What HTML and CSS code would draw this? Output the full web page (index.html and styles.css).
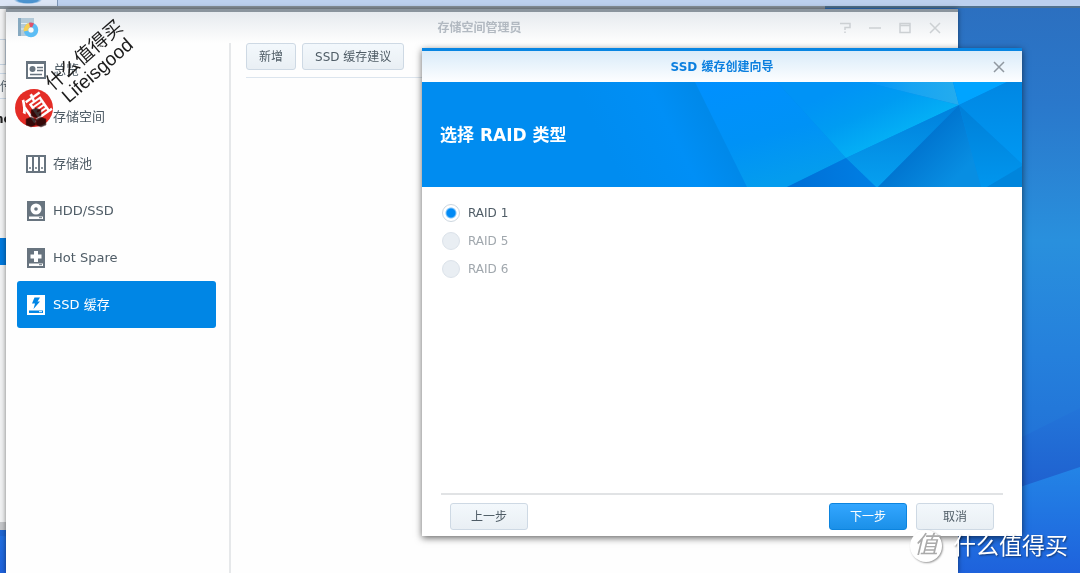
FILE: index.html
```html
<!DOCTYPE html>
<html lang="zh-CN">
<head>
<meta charset="utf-8">
<title>存储空间管理员</title>
<link rel="stylesheet" href="styles.css">
</head>
<body>
<div class="desktop">
  <svg class="wallpaper" viewBox="0 0 1080 573" preserveAspectRatio="none" aria-hidden="true">
    <defs>
      <linearGradient id="sky" x1="0" y1="0" x2="0" y2="1">
        <stop offset="0" stop-color="#2c6fbf"/><stop offset=".18" stop-color="#2a78cb"/>
        <stop offset=".42" stop-color="#2990dd"/><stop offset=".62" stop-color="#2580dc"/><stop offset="1" stop-color="#1d5fd0"/>
      </linearGradient>
      <linearGradient id="ray" gradientUnits="userSpaceOnUse" x1="0" y1="400" x2="0" y2="490">
        <stop offset="0" stop-color="#2377da"/><stop offset="1" stop-color="#1f60cf"/>
      </linearGradient>
      <linearGradient id="hill" gradientUnits="userSpaceOnUse" x1="0" y1="467" x2="0" y2="573">
        <stop offset="0" stop-color="#2384e6"/><stop offset="1" stop-color="#1e62dc"/>
      </linearGradient>
    </defs>
    <rect width="1080" height="573" fill="url(#sky)"/>
    <path d="M0 573V560L1020 438L1080 408V573Z" fill="url(#ray)"/>
    <path d="M0 573V536Q760 570 1020 487L1080 467V573Z" fill="url(#hill)"/>
  </svg>
  <div class="taskbar"><span class="task"></span></div>

  <div class="back-window">
    <span class="back-button"></span>
    <span class="back-header">传</span>
    <span class="back-text">ne</span>
    <span class="back-selected"></span>
  </div>

  <section class="window">
    <header class="window-header">
      <svg class="app-icon" viewBox="0 0 22 22" aria-hidden="true">
        <path d="M1 1H17V19H1Z" fill="#b3cad9"/><path d="M1 1H4V19H1Z" fill="#86a9c0"/>
        <path d="M4 6.500H17M4 12H12" stroke="#e4eff5" stroke-width="1.200"/>
        <circle cx="14" cy="13" r="5" fill="none" stroke="#5bbdf5" stroke-width="4.500"/>
        <path d="M9 14A5 5 0 0 1 13 8" fill="none" stroke="#f6cf58" stroke-width="4.500"/>
        <path d="M12.500 8A5 5 0 0 1 16 8.400" fill="none" stroke="#df5268" stroke-width="4.500"/>
        <circle cx="14" cy="13" r="2.500" fill="#f8fbfc"/>
      </svg>
      <h1 class="window-title">存储空间管理员</h1>
      <div class="window-controls">
        <button class="control" aria-label="帮助"><svg viewBox="0 0 12 12"><path d="M1 1.500H11V5.500H6V8M6 9.500V11"/></svg></button>
        <button class="control" aria-label="最小化"><svg viewBox="0 0 12 12"><path d="M0 6H12"/></svg></button>
        <button class="control" aria-label="最大化"><svg viewBox="0 0 12 12"><path d="M1 1.500H11V10.500H1ZM1 3.500H11"/></svg></button>
        <button class="control" aria-label="关闭"><svg viewBox="0 0 12 12"><path d="M1 1L11 11M11 1L1 11"/></svg></button>
      </div>
    </header>
    <div class="window-body">
      <nav class="sidebar">
        <a class="nav-item" href="#overview">
          <svg class="nav-icon" viewBox="0 0 22 22"><path d="M1 2H21V20H1Z" fill="#68747f"/><path d="M3 5H19V18H3Z" fill="#fff"/><circle cx="7.500" cy="10" r="3" fill="#68747f"/><path d="M12 8.500H18M12 11.500H18M5 15.500H17" stroke="#68747f" stroke-width="1.600"/></svg>
          <span>总览</span></a>
        <a class="nav-item" href="#volume">
          <svg class="nav-icon" viewBox="0 0 22 22"><g fill="#3c3030" stroke="#8a5f62" stroke-width=".6"><path d="M11 2L16 4V10L11 12L6 10V4Z"/><path d="M6 11L11 13V19L6 21L1 19V13Z"/><path d="M16 11L21 13V19L16 21L11 19V13Z"/></g></svg>
          <span>存储空间</span></a>
        <a class="nav-item" href="#pool">
          <svg class="nav-icon" viewBox="0 0 22 22"><path d="M1 2H21V20H1Z" fill="#68747f"/><path d="M3 4H7V18H3ZM9 4H13V18H9ZM15 4H19V18H15Z" fill="#fff"/><path d="M4 15H6M10 15H12M16 15H18" stroke="#68747f" stroke-width="1.500"/></svg>
          <span>存储池</span></a>
        <a class="nav-item" href="#hdd">
          <svg class="nav-icon" viewBox="0 0 22 22"><path d="M2 1H20V21H2Z" fill="#68747f"/><circle cx="11" cy="9" r="5.500" fill="#fff"/><circle cx="11" cy="9" r="1.800" fill="#68747f"/><path d="M4 16.500H18V19H4Z" fill="#fff"/><path d="M14 17.700H17" stroke="#68747f"/></svg>
          <span>HDD/SSD</span></a>
        <a class="nav-item" href="#spare">
          <svg class="nav-icon" viewBox="0 0 22 22"><path d="M2 1H20V21H2Z" fill="#68747f"/><path d="M9 4H13V7.500H16.500V11.500H13V15H9V11.500H5.500V7.500H9Z" fill="#fff"/><path d="M4 16.500H18V19H4Z" fill="#fff"/><path d="M14 17.700H17" stroke="#68747f"/></svg>
          <span>Hot Spare</span></a>
        <a class="nav-item nav-item-active" href="#cache" aria-current="page">
          <svg class="nav-icon" viewBox="0 0 22 22"><path d="M2 1H20V21H2Z" fill="#fff"/><path d="M9.500 3.500H15L12.500 7.500H15L8.500 15L10 9.500H7Z" fill="#0086e5"/><path d="M4 16.500H18V19H4Z" fill="#0086e5"/><path d="M14 17.700H17" stroke="#fff"/></svg>
          <span>SSD 缓存</span></a>
      </nav>
      <main class="content">
        <div class="toolbar">
          <button class="button">新增</button>
          <button class="button">SSD 缓存建议</button>
        </div>
      </main>
    </div>
  </section>

  <section class="dialog" role="dialog" aria-labelledby="dialog-title">
    <header class="dialog-header">
      <h2 class="dialog-title" id="dialog-title">SSD 缓存创建向导</h2>
      <button class="control dialog-close" aria-label="关闭"><svg viewBox="0 0 12 12"><path d="M1 1L11 11M11 1L1 11"/></svg></button>
    </header>
    <div class="banner">
      <svg class="banner-art" viewBox="0 0 600 105" preserveAspectRatio="xMaxYMid slice" aria-hidden="true">
        <defs>
          <linearGradient id="b0" gradientUnits="userSpaceOnUse" x1="190" y1="80" x2="310" y2="20"><stop offset="0" stop-color="#008cf0"/><stop offset=".5" stop-color="#008ff6"/><stop offset=".8" stop-color="#0089ea"/></linearGradient>
          <linearGradient id="b1" x1="0" y1="0" x2=".4" y2="1"><stop offset="0" stop-color="#0090ff"/><stop offset=".6" stop-color="#0092f6"/><stop offset="1" stop-color="#049cee"/></linearGradient>
          <linearGradient id="b2" gradientUnits="userSpaceOnUse" x1="430" y1="0" x2="462" y2="68"><stop offset="0" stop-color="#0093f6"/><stop offset=".45" stop-color="#009cf2"/><stop offset="1" stop-color="#05b4f6"/></linearGradient>
          <linearGradient id="b3" x1="0" y1="0" x2="1" y2="0"><stop offset="0" stop-color="#0094fa"/><stop offset=".5" stop-color="#18a4f2"/><stop offset="1" stop-color="#24acee"/></linearGradient>
          <linearGradient id="b4" x1="0" y1="0" x2="0" y2="1"><stop offset="0" stop-color="#0080dc"/><stop offset="1" stop-color="#06a0f0"/></linearGradient>
          <linearGradient id="b5" gradientUnits="userSpaceOnUse" x1="485" y1="65" x2="525" y2="105"><stop offset="0" stop-color="#0072ce"/><stop offset="1" stop-color="#088ee2"/></linearGradient>
          <linearGradient id="b6" x1="0" y1="0" x2="0" y2="1"><stop offset="0" stop-color="#0087e3"/><stop offset="1" stop-color="#0098f2"/></linearGradient>
          <linearGradient id="b8" x1="0" y1="0" x2="0" y2="1"><stop offset="0" stop-color="#007fd8"/><stop offset="1" stop-color="#0096ee"/></linearGradient>
          <linearGradient id="b7"><stop offset="0" stop-color="#006fd6"/><stop offset="1" stop-color="#007fe4"/></linearGradient>
        </defs>
        <path d="M0 0H600V105H0Z" fill="url(#b0)"/>
        <path d="M273 0H355L424 76L365 105H325Z" fill="url(#b1)"/>
        <path d="M355 0H443L537 23L424 76Z" fill="url(#b2)"/>
        <path d="M443 0H531L537 23Z" fill="url(#b3)"/>
        <path d="M531 0H585L537 23Z" fill="#00a4ff"/>
        <path d="M585 0H600V82L537 23Z" fill="url(#b6)"/>
        <path d="M424 76L537 23L456 105H454Z" fill="url(#b4)"/>
        <path d="M365 105L424 76L454 105Z" fill="url(#b7)"/>
        <path d="M537 23L559 105H456Z" fill="url(#b5)"/>
        <path d="M537 23L600 82V85L565 105H559Z" fill="url(#b8)"/>
        <path d="M600 84V105H565Z" fill="#0085dc"/>
      </svg>
      <h3 class="banner-title">选择 RAID 类型</h3>
    </div>
    <form class="options">
      <label class="option"><input class="radio" type="radio" name="raid" checked><span>RAID 1</span></label>
      <label class="option option-disabled"><input class="radio" type="radio" name="raid" disabled><span>RAID 5</span></label>
      <label class="option option-disabled"><input class="radio" type="radio" name="raid" disabled><span>RAID 6</span></label>
    </form>
    <footer class="dialog-footer">
      <button class="button button-wide button-back">上一步</button>
      <button class="button button-wide button-primary">下一步</button>
      <button class="button button-wide">取消</button>
    </footer>
  </section>

  <div class="stamp">什么值得买<br>Lifeisgood</div>
  <div class="seal"><span class="seal-text">值</span></div>
  <div class="brand"><span class="brand-logo">值</span><span>什么值得买</span></div>
</div>
</body>
</html>
```
FILE: styles.css
```css
* { box-sizing: border-box; }
body {
  margin: 0;
  font: 12px/18px "DejaVu Sans", "Noto Sans CJK SC", sans-serif;
  color: #4f5c66;
}
h1, h2, h3 { margin: 0; }
button { font: inherit; cursor: pointer; }

.desktop { position: relative; height: 100vh; overflow: hidden; }
.wallpaper { position: absolute; width: 100%; height: 100%; }
.taskbar {
  position: relative;
  height: 8px;
  background: #bcd0ee;
  border-bottom: 2px solid #52728e;
}
.task {
  display: block;
  width: 58px;
  height: 6px;
  background: radial-gradient(ellipse 14px 4px at 28px 0, #4b93cf 70%, transparent), #dbe5f5;
  border-right: 1px solid #7e97b8;
}

.back-window {
  position: absolute;
  top: 6px;
  left: 0;
  right: 255px;
  height: 524px;
  background: #f1f2f3;
  border-top: 3px solid #8a949d;
  border-bottom: 8px solid #c4c6c9;
}
.back-button, .back-header, .back-text, .back-selected { position: absolute; left: 0; width: 6px; overflow: hidden; }
.back-button { top: 30px; height: 26px; border: solid #c3d1df; border-width: 1px 1px 1px 0; }
.back-header { top: 64px; height: 26px; line-height: 26px; border: solid #c9d7e5; border-width: 1px 0; }
.back-text { top: 101px; font-weight: bold; text-indent: -5px; color: #222; }
.back-selected { top: 229px; height: 27px; background: #0079dc; }

.window {
  position: absolute;
  top: 9px;
  left: 6px;
  right: 122px;
  bottom: 0;
  display: flex;
  flex-direction: column;
  background: #fefefe;
  border-top: 3px solid #8a949d;
  box-shadow: 0 0 5px rgba(0, 0, 0, .5);
}
.window-header {
  display: grid;
  grid-template-columns: 1fr auto 1fr;
  align-items: center;
  height: 31px;
  padding: 0 16px 0 11px;
  background: linear-gradient(#e6eaee, #fefefe);
}
.app-icon { width: 22px; height: 22px; }
.window-title { font-size: 12px; color: #b2b9c1; }
.window-controls { display: flex; justify-content: flex-end; gap: 16px; }
.control {
  display: flex;
  align-items: center;
  justify-content: center;
  width: 14px;
  height: 18px;
  padding: 0;
  background: none;
  border: 0;
}
.control svg { width: 12px; height: 12px; fill: none; stroke: #ccd0d3; stroke-width: 1.5; }

.window-body { flex: 1; display: flex; }
.sidebar {
  flex: 0 0 225px;
  padding: 3px 13px 0 11px;
  border-right: 2px solid #e6e8ea;
}
.nav-item {
  display: flex;
  align-items: center;
  gap: 6px;
  height: 47px;
  padding-left: 8px;
  border-radius: 3px;
  font-size: 13px;
  color: #4f5c66;
  text-decoration: none;
}
.nav-item-active { background: #0086e5; color: #fff; }
.nav-icon { width: 22px; height: 22px; }
.content { flex: 1; padding: 0 15px; }
.toolbar { display: flex; gap: 6px; height: 35px; border-bottom: 1px solid #dce5ee; }

.button {
  height: 27px;
  padding: 0 12px;
  border: 1px solid #ced9e4;
  border-radius: 3px;
  background: linear-gradient(#f3f8fc, #e9eff4);
  color: #4f5c66;
}
.button-wide { width: 78px; padding: 0; }
.button-primary {
  border-color: #0c84de;
  background: linear-gradient(#33a6ff, #1b90e8);
  color: #fff;
}
.button-back { margin-right: auto; }

.dialog {
  position: absolute;
  top: 48px;
  left: 422px;
  right: 58px;
  bottom: 37px;
  display: flex;
  flex-direction: column;
  background: #fff;
  border-top: 3px solid #0785e2;
  box-shadow: 0 2px 7px rgba(0, 0, 0, .6);
}
.dialog-header {
  position: relative;
  display: flex;
  align-items: center;
  justify-content: center;
  height: 31px;
  background: linear-gradient(#d9ebf9, #fdfeff);
}
.dialog-title { font-size: 12px; color: #0b7fdf; }
.dialog-close { position: absolute; right: 16px; }
.dialog-close svg { stroke: #9098a0; }
.banner {
  position: relative;
  display: flex;
  align-items: center;
  height: 105px;
  padding-left: 18px;
  background: #008cf0;
}
.banner-art { position: absolute; inset: 0; width: 100%; height: 100%; }
.banner-title { position: relative; font-size: 17px; line-height: 24px; color: #fff; }
.options { flex: 1; padding: 12px 20px; }
.option { display: flex; align-items: center; gap: 8px; height: 28px; }
.option-disabled { color: #a0a7ad; }
.radio {
  appearance: none;
  width: 18px;
  height: 18px;
  margin: 0;
  border: 1px solid #cdd7e0;
  border-radius: 50%;
  background: #fff;
}
.radio:checked { background: radial-gradient(circle, #008af5 4px, #fff 6px); }
.radio:disabled { background: #e9eef3; border-color: #dce3ea; }
.dialog-footer {
  display: flex;
  gap: 9px;
  margin: 0 19px;
  padding: 8px 9px 6px;
  border-top: 2px solid #e1e3e5;
}

.stamp {
  position: absolute;
  top: 43px;
  left: 41px;
  width: 100px;
  transform: rotate(-41deg);
  font: 19px/20px "Liberation Sans", "Noto Sans CJK SC", sans-serif;
  text-align: center;
  color: #1c1c1c;
}
.seal {
  position: absolute;
  top: 89px;
  left: 15px;
  width: 38px;
  height: 38px;
  border-radius: 50%;
  background: #e52c26;
  mix-blend-mode: multiply;
}
.seal-text {
  display: block;
  transform: rotate(-35deg);
  font: 500 28px/34px "Noto Sans CJK SC", sans-serif;
  text-align: center;
  color: #fff;
}
.brand {
  position: absolute;
  right: 12px;
  bottom: 10px;
  display: flex;
  align-items: center;
  gap: 11px;
  font-size: 23px;
  line-height: 34px;
  color: #fff;
  text-shadow: 1px 1px 2px rgba(0, 0, 0, .5);
}
.brand-logo {
  width: 32px;
  height: 32px;
  border-radius: 50%;
  background: #fff;
  box-shadow: 1px 1px 2px rgba(0, 0, 0, .4);
  font-size: 24px;
  font-style: italic;
  line-height: 30px;
  text-align: center;
  text-shadow: none;
  color: #aaa;
}
```
